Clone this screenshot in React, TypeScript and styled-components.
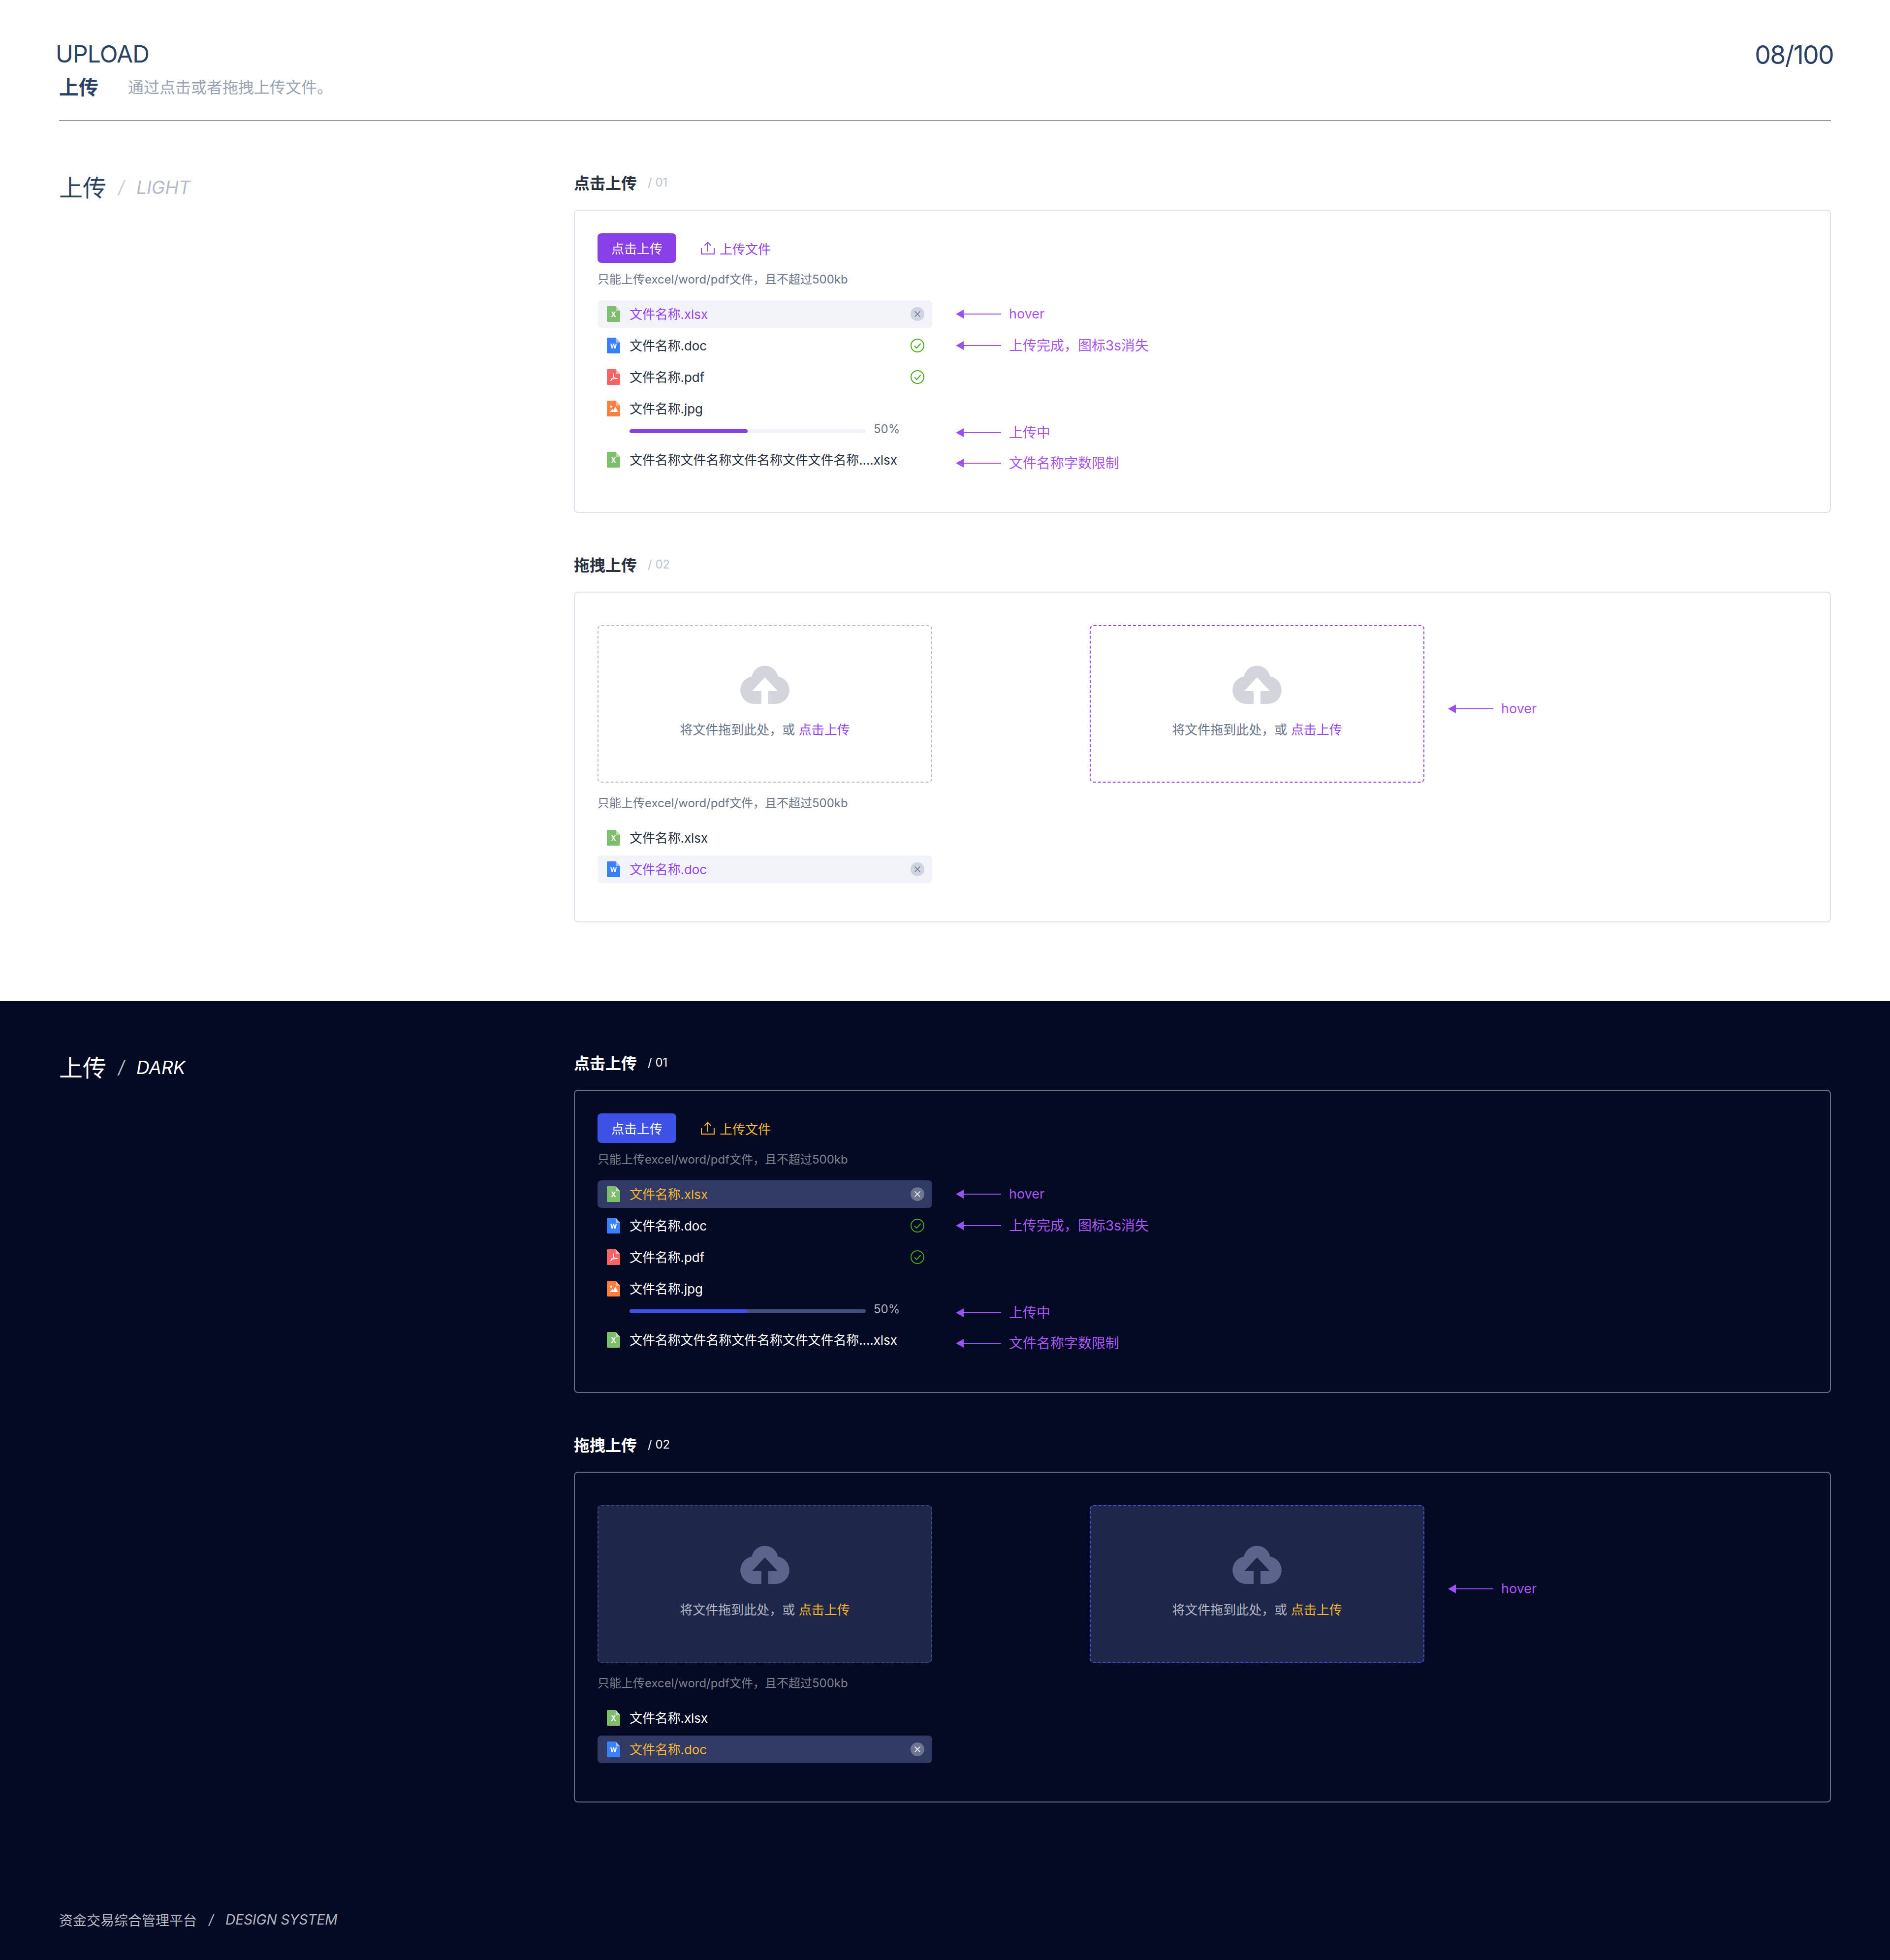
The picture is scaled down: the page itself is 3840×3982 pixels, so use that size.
import styled, { createGlobalStyle, ThemeProvider } from "styled-components";

const GlobalStyle = createGlobalStyle`
  html, body {
    margin: 0;
    padding: 0;
    background: #ffffff;
    font-family: Inter, "Noto Sans CJK SC", sans-serif;
  }
`;

const lightTheme = {
  bg: "#ffffff",
  title: "#2a3040",
  mode: "#2b4264",
  modeEm: "#b4bccc",
  modeSlash: "#c9cedb",
  sectionNo: "#bcc3d2",
  border: "#dfe1ee",
  primary: "#8a3ee8",
  accent: "#9644f0",
  hint: "#6b7488",
  name: "#2a3040",
  hoverBg: "#f2f3f9",
  closeBg: "#d0d4e2",
  closeFg: "#6b7488",
  track: "#f2f3f9",
  percent: "#6b7488",
  zoneBg: "transparent",
  zoneBorder: "#b4bccc",
  zoneHover: "#9644f0",
  zoneText: "#6b7488",
  cloud: "#d2d6dc",
  cloudArrow: "#ffffff",
};

const darkTheme = {
  bg: "#050a24",
  title: "#ffffff",
  mode: "#ffffff",
  modeEm: "#ffffff",
  modeSlash: "#b8bac4",
  sectionNo: "#ffffff",
  border: "#6a6d7e",
  primary: "#3d50e8",
  accent: "#f8b62d",
  hint: "#7f8290",
  name: "#ffffff",
  hoverBg: "#303a64",
  closeBg: "#6e7590",
  closeFg: "#ffffff",
  track: "#434c7a",
  percent: "#b3b6c4",
  zoneBg: "#1e274a",
  zoneBorder: "#3f4a77",
  zoneHover: "#3d50e8",
  zoneText: "#b3b6c4",
  cloud: "#5c648c",
  cloudArrow: "#1e274a",
};

const Page = styled.div`
  width: 3840px;
  height: 3982px;
  overflow: hidden;
`;

const Top = styled.header`
  height: 164px;
  margin: 0 120px;
  padding-top: 80px;
  border-bottom: 2px solid #979797;
  display: flex;
  justify-content: space-between;
  align-items: flex-start;
`;

const TopLeft = styled.div`
  display: flex;
  flex-direction: column;
`;

const Upload = styled.div`
  margin-left: -7px;
  font-size: 48px;
  line-height: 60px;
  color: #2b4264;
  letter-spacing: -0.8px;
`;

const TopRow = styled.div`
  margin-top: 10px;
  display: flex;
  align-items: center;
  gap: 60px;
  height: 50px;
`;

const TopName = styled.span`
  font-size: 40px;
  font-weight: 700;
  color: #2b4264;
`;

const TopDesc = styled.span`
  font-size: 32px;
  color: #9aa3b2;
`;

const Counter = styled.div`
  margin-right: -5px;
  font-size: 52px;
  line-height: 64px;
  letter-spacing: -1.800px;
  color: #2b4264;
`;

const Body = styled.section<{ $height: number }>`
  height: ${(p) => p.$height}px;
  box-sizing: border-box;
  padding: 104px 120px 0;
  background: ${(p) => p.theme.bg};
`;

const Columns = styled.div`
  display: grid;
  grid-template-columns: 1046px 2554px;
`;

const Mode = styled.div`
  display: flex;
  align-items: center;
  gap: 24px;
  height: 56px;
`;

const ModeName = styled.span`
  font-size: 48px;
  color: ${(p) => p.theme.mode};
`;

const ModeSlash = styled.span`
  margin-top: 4px;
  font-size: 36px;
  font-style: italic;
  color: ${(p) => p.theme.modeSlash};
`;

const ModeEm = styled.span`
  margin-top: 4px;
  font-size: 37px;
  font-style: italic;
  color: ${(p) => p.theme.modeEm};
`;

const SectionTitle = styled.div`
  display: flex;
  align-items: center;
  gap: 22px;
  height: 40px;
  margin: 0 0 36px;
`;

const SectionName = styled.span`
  font-size: 32px;
  font-weight: 700;
  color: ${(p) => p.theme.title};
`;

const SectionNo = styled.span`
  font-size: 24px;
  color: ${(p) => p.theme.sectionNo};
`;

const Panel = styled.div<{ $top: number }>`
  border: 2px solid ${(p) => p.theme.border};
  border-radius: 8px;
  padding: ${(p) => p.$top}px 46px 78px;
  margin-bottom: 84px;
`;

const Actions = styled.div`
  display: flex;
  align-items: center;
  gap: 50px;
`;

const PrimaryButton = styled.button`
  width: 160px;
  height: 60px;
  padding: 0 0 2px;
  border: 0;
  border-radius: 8px;
  background: ${(p) => p.theme.primary};
  color: #ffffff;
  font: inherit;
  font-size: 26px;
`;

const TextButton = styled.div`
  display: flex;
  align-items: center;
  gap: 10px;
  font-size: 26px;
  color: ${(p) => p.theme.accent};
`;

const Hint = styled.div<{ $top: number }>`
  margin: ${(p) => p.$top}px 0 24px;
  font-size: 24px;
  line-height: 36px;
  color: ${(p) => p.theme.hint};
`;

const List = styled.div`
  display: flex;
  flex-direction: column;
  gap: 8px;
  width: 680px;
`;

const Annotated = styled.div`
  display: flex;
  align-items: center;
  gap: 48px;
`;

const FileRow = styled.div<{ $hover?: boolean }>`
  width: 680px;
  height: 56px;
  flex: none;
  box-sizing: border-box;
  display: flex;
  align-items: center;
  gap: 19px;
  padding: 0 16px 0 19px;
  border-radius: 8px;
  background: ${(p) => (p.$hover ? p.theme.hoverBg : "transparent")};
  color: ${(p) => (p.$hover ? p.theme.accent : p.theme.name)};
  font-size: 26px;
`;

const FileName = styled.span`
  flex: 1;
  padding-bottom: 3px;
  white-space: nowrap;
  letter-spacing: -0.1px;
`;

const ProgressRow = styled.div`
  width: 680px;
  height: 32px;
  flex: none;
  box-sizing: border-box;
  padding-left: 65px;
  display: flex;
  align-items: flex-start;
  gap: 16px;
`;

const Track = styled.div`
  width: 480px;
  height: 8px;
  margin-top: 6px;
  border-radius: 4px;
  overflow: hidden;
  background: ${(p) => p.theme.track};
`;

const Fill = styled.div`
  height: 100%;
  border-radius: 4px;
  background: ${(p) => p.theme.primary};
`;

const Percent = styled.span`
  font-size: 24px;
  line-height: 32px;
  margin-top: -10px;
  color: ${(p) => p.theme.percent};
`;

const Note = styled.div<{ $shift?: number; $latin?: boolean }>`
  display: flex;
  align-items: center;
  gap: 16px;
  flex: none;
  margin-top: ${(p) => (p.$shift ? p.$shift * 2 : 0)}px;
  font-size: ${(p) => (p.$latin ? 27 : 28)}px;
  line-height: 36px;
  color: #a855f7;
  white-space: nowrap;
`;

const Zones = styled.div`
  display: flex;
  align-items: flex-start;
  gap: 320px;
`;

const ZoneColumn = styled.div`
  width: 680px;
  flex: none;
`;

const Zone = styled.div<{ $hover?: boolean }>`
  width: 680px;
  height: 320px;
  flex: none;
  box-sizing: border-box;
  display: flex;
  flex-direction: column;
  align-items: center;
  padding-top: 78px;
  border: 2px dashed ${(p) => (p.$hover ? p.theme.zoneHover : p.theme.zoneBorder)};
  border-radius: 8px;
  background: ${(p) => p.theme.zoneBg};
`;

const ZoneText = styled.div`
  margin-top: 33px;
  font-size: 26px;
  line-height: 40px;
  color: ${(p) => p.theme.zoneText};
`;

const Accent = styled.span`
  color: ${(p) => p.theme.accent};
`;

const CloudSvg = styled.svg`
  display: block;
  .cloud {
    fill: ${(p) => p.theme.cloud};
  }
  .arrow {
    fill: ${(p) => p.theme.cloudArrow};
  }
`;

const CircleIcon = styled.svg`
  display: block;
  flex: none;
`;

const CloseDisc = styled.circle`
  fill: ${(p) => p.theme.closeBg};
`;

const CloseMark = styled.path`
  fill: none;
  stroke: ${(p) => p.theme.closeFg};
  stroke-width: 1.6;
`;

const Footer = styled.div`
  margin-top: 134px;
  display: flex;
  align-items: center;
  gap: 24px;
  height: 40px;
  font-size: 28px;
  color: #b5b7c2;
`;

const FooterEm = styled.span`
  font-style: italic;
`;

function FileIcon({ kind }: { kind: "xlsx" | "doc" | "pdf" | "jpg" }) {
  const colors = {
    xlsx: ["#7dbf6c", "#bcdcb2"],
    doc: ["#3b80fb", "#9dbffd"],
    pdf: ["#fb6264", "#fdb0b1"],
    jpg: ["#fe7f40", "#feb99a"],
  }[kind];
  return (
    <svg width="27" height="32" viewBox="0 0 27 32" style={{ flex: "none" }}>
      <path
        d="M2 0H18L27 10V30a2 2 0 0 1-2 2H2a2 2 0 0 1-2-2V2a2 2 0 0 1 2-2z"
        fill={colors[0]}
      />
      <path d="M18 0L27 10H18z" fill={colors[1]} />
      {kind === "xlsx" && (
        <text x="13.5" y="22" textAnchor="middle" fontSize="14" fontWeight="700" fill="#fff" fontFamily="Inter, sans-serif">
          X
        </text>
      )}
      {kind === "doc" && (
        <text x="13.5" y="22" textAnchor="middle" fontSize="13" fontWeight="700" fill="#fff" fontFamily="Inter, sans-serif">
          W
        </text>
      )}
      {kind === "pdf" && (
        <path
          d="M13 9c-.6 3 .4 6 2 8 1.400 1.400 4 2 6 1.600M14 15c-1 3-3 6-6 8M9 20l12-1"
          fill="none"
          stroke="#fff"
          strokeWidth="1.700"
          strokeLinecap="round"
        />
      )}
      {kind === "jpg" && (
        <>
          <circle cx="9" cy="12" r="2.200" fill="#fff" />
          <path d="M6 23l5-6 2.500 2.500L17 12l6 11z" fill="#fff" />
        </>
      )}
    </svg>
  );
}

function CloseIcon() {
  return (
    <CircleIcon width="28" height="28" viewBox="0 0 28 28">
      <CloseDisc cx="14" cy="14" r="14" />
      <CloseMark d="M8.500 8.500l11 11M19.500 8.500l-11 11" />
    </CircleIcon>
  );
}

function CheckIcon() {
  return (
    <CircleIcon width="28" height="28" viewBox="0 0 28 28">
      <circle cx="14" cy="14" r="13" fill="none" stroke="#4aa815" strokeWidth="2" />
      <path d="M8 14.500l4.500 4.500 8-9" fill="none" stroke="#4aa815" strokeWidth="2" />
    </CircleIcon>
  );
}

function UploadIcon() {
  return (
    <svg width="28" height="26" viewBox="0 0 28 26" fill="none" stroke="currentColor" strokeWidth="2">
      <path d="M1 13V25H27V13" />
      <path d="M14 20V2M7.500 8L14 1.500L20.500 8" />
    </svg>
  );
}

function Cloud() {
  return (
    <CloudSvg width="100" height="80" viewBox="0 0 100 80">
      <path
        className="cloud"
        d="M28 80A28 28 0 0 1 23.500 24.400A27 27 0 0 1 76.500 24.400A28 28 0 0 1 72 80Z"
      />
      <path className="arrow" d="M50 26L76 54H57V80H43V54H24z" />
    </CloudSvg>
  );
}

function Arrow() {
  return (
    <svg width="92" height="18" viewBox="0 0 92 18" style={{ flex: "none" }}>
      <path d="M0 9L16 0V8H92V10H16V18z" fill="#9a50f5" />
    </svg>
  );
}

function Annotation({ text, shift }: { text: string; shift?: number }) {
  return (
    <Note $shift={shift} $latin={text === "hover"}>
      <Arrow />
      {text}
    </Note>
  );
}

function UploadSections() {
  return (
    <div>
      <SectionTitle>
        <SectionName>点击上传</SectionName>
        <SectionNo>/ 01</SectionNo>
      </SectionTitle>
      <Panel $top={46}>
        <Actions>
          <PrimaryButton>点击上传</PrimaryButton>
          <TextButton>
            <UploadIcon />
            上传文件
          </TextButton>
        </Actions>
        <Hint $top={16}>只能上传excel/word/pdf文件，且不超过500kb</Hint>
        <List>
          <Annotated>
            <FileRow $hover>
              <FileIcon kind="xlsx" />
              <FileName>文件名称.xlsx</FileName>
              <CloseIcon />
            </FileRow>
            <Annotation text="hover" />
          </Annotated>
          <Annotated>
            <FileRow>
              <FileIcon kind="doc" />
              <FileName>文件名称.doc</FileName>
              <CheckIcon />
            </FileRow>
            <Annotation text="上传完成，图标3s消失" />
          </Annotated>
          <FileRow>
            <FileIcon kind="pdf" />
            <FileName>文件名称.pdf</FileName>
            <CheckIcon />
          </FileRow>
          <FileRow>
            <FileIcon kind="jpg" />
            <FileName>文件名称.jpg</FileName>
          </FileRow>
          <Annotated>
            <ProgressRow>
              <Track>
                <Fill style={{ width: "50%" }} />
              </Track>
              <Percent>50%</Percent>
            </ProgressRow>
            <Annotation text="上传中" shift={-3} />
          </Annotated>
          <Annotated>
            <FileRow>
              <FileIcon kind="xlsx" />
              <FileName>文件名称文件名称文件名称文件文件名称....xlsx</FileName>
            </FileRow>
            <Annotation text="文件名称字数限制" shift={7} />
          </Annotated>
        </List>
      </Panel>

      <SectionTitle>
        <SectionName>拖拽上传</SectionName>
        <SectionNo>/ 02</SectionNo>
      </SectionTitle>
      <Panel $top={66}>
        <Zones>
          <ZoneColumn>
            <Zone>
              <Cloud />
              <ZoneText>
                将文件拖到此处，或 <Accent>点击上传</Accent>
              </ZoneText>
            </Zone>
            <Hint $top={24}>只能上传excel/word/pdf文件，且不超过500kb</Hint>
            <List>
              <FileRow>
                <FileIcon kind="xlsx" />
                <FileName>文件名称.xlsx</FileName>
              </FileRow>
              <FileRow $hover>
                <FileIcon kind="doc" />
                <FileName>文件名称.doc</FileName>
                <CloseIcon />
              </FileRow>
            </List>
          </ZoneColumn>
          <Annotated>
            <Zone $hover>
              <Cloud />
              <ZoneText>
                将文件拖到此处，或 <Accent>点击上传</Accent>
              </ZoneText>
            </Zone>
            <Annotation text="hover" shift={10} />
          </Annotated>
        </Zones>
      </Panel>
    </div>
  );
}

function ModeLabel({ name }: { name: string }) {
  return (
    <Mode>
      <ModeName>上传</ModeName>
      <ModeSlash>/</ModeSlash>
      <ModeEm>{name}</ModeEm>
    </Mode>
  );
}

export default function App() {
  return (
    <Page>
      <GlobalStyle />
      <ThemeProvider theme={lightTheme}>
        <Top>
          <TopLeft>
            <Upload>UPLOAD</Upload>
            <TopRow>
              <TopName>上传</TopName>
              <TopDesc>通过点击或者拖拽上传文件。</TopDesc>
            </TopRow>
          </TopLeft>
          <Counter>08/100</Counter>
        </Top>
        <Body $height={1788}>
          <Columns>
            <ModeLabel name="LIGHT" />
            <UploadSections />
          </Columns>
        </Body>
      </ThemeProvider>
      <ThemeProvider theme={darkTheme}>
        <Body $height={1948}>
          <Columns>
            <ModeLabel name="DARK" />
            <UploadSections />
          </Columns>
          <Footer>
            <span>资金交易综合管理平台</span>
            <FooterEm>/</FooterEm>
            <FooterEm>DESIGN SYSTEM</FooterEm>
          </Footer>
        </Body>
      </ThemeProvider>
    </Page>
  );
}
